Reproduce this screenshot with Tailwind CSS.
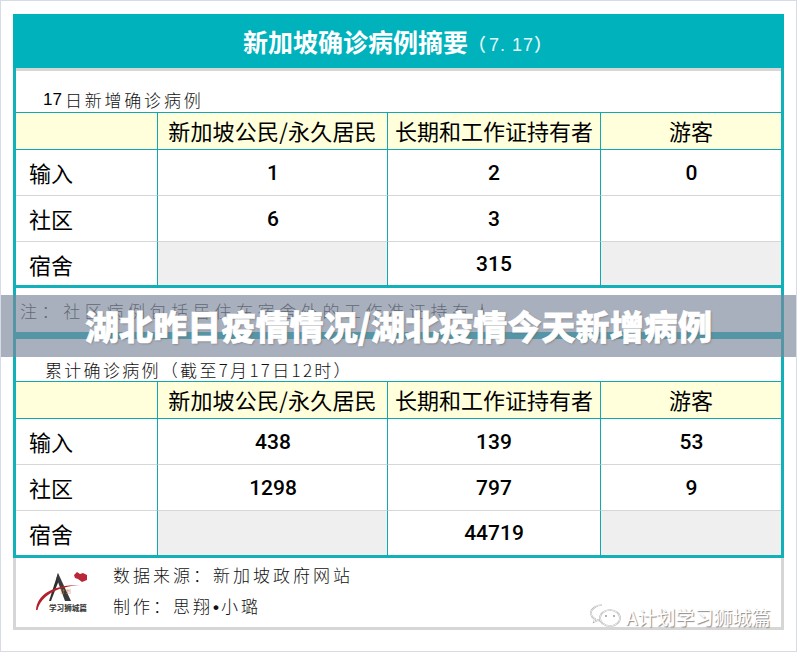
<!DOCTYPE html>
<html lang="zh">
<head>
<meta charset="utf-8">
<script src="https://cdn.jsdelivr.net/npm/@tailwindcss/browser@4"></script>
</head>
<body class="bg-white">
<div class="relative w-[797px] h-[652px] overflow-hidden bg-white border border-[#d5dce6] pt-[13px] pl-[12px] font-['Noto_Sans_CJK_SC','Noto_Sans',sans-serif] text-black">
  <div class="relative w-[771px] h-[616px] flex flex-col">
    <div class="h-[54px] shrink-0 bg-[#00b2bc] flex items-center pl-[230px] text-white">
      <span class="text-[25px] font-bold leading-none">新加坡确诊病例摘要</span>
      <span class="text-[18px] font-medium leading-none tracking-[1px] mt-[5px] text-[#e6f8f9]">（<span class="font-['Liberation_Sans'] ml-[2px]">7. 17</span>）</span>
    </div>
    <div class="h-[3px] shrink-0 bg-[#d6d6d6] border-x-[3px] border-[#12b1ba]"></div>

    <div class="flex flex-col border-x-[3px] border-[#12b1ba] h-[487px] shrink-0">
      <div class="h-[41px] flex items-end pl-[27px] text-[17px] leading-none font-light tracking-[2.8px] pb-[4px] text-[#111]">
        <span class="font-['Liberation_Sans'] text-[17px] tracking-[0px] text-black">17</span><span class="ml-[3px]">日新增确诊病例</span>
      </div>
      <div class="grid grid-cols-[142px_230px_213px_1fr] grid-rows-[37px_46px_46px_46px] border-t border-[#12a8b0] text-center">
        <div class="bg-[#ffffdc] border-r border-b border-[#12a8b0]"></div>
        <div class="bg-[#ffffdc] border-r border-b border-[#12a8b0] text-[22px] leading-[34px] tracking-[0.2px]">新加坡公民/永久居民</div>
        <div class="bg-[#ffffdc] border-r border-b border-[#12a8b0] text-[22px] leading-[34px]">长期和工作证持有者</div>
        <div class="bg-[#ffffdc] border-b border-[#12a8b0] text-[22px] leading-[34px]">游客</div>

        <div class="border-r border-[#12a8b0] border-b border-b-[#d3d7da] text-left pl-[13px] text-[22px] leading-[44px]">输入</div>
        <div class="border-r border-[#12a8b0] border-b border-b-[#d3d7da] pl-[1px] font-['Roboto'] font-medium text-[21px] leading-[47px]">1</div>
        <div class="border-r border-[#12a8b0] border-b border-b-[#d3d7da] font-['Roboto'] font-medium text-[21px] leading-[47px]">2</div>
        <div class="border-b border-b-[#d3d7da] pl-[1px] font-['Roboto'] font-medium text-[21px] leading-[47px]">0</div>

        <div class="border-r border-[#12a8b0] border-b border-b-[#d3d7da] text-left pl-[13px] text-[22px] leading-[44px]">社区</div>
        <div class="border-r border-[#12a8b0] border-b border-b-[#d3d7da] pl-[1px] font-['Roboto'] font-medium text-[21px] leading-[47px]">6</div>
        <div class="border-r border-[#12a8b0] border-b border-b-[#d3d7da] font-['Roboto'] font-medium text-[21px] leading-[47px]">3</div>
        <div class="border-b border-b-[#d3d7da]"></div>

        <div class="border-r border-[#12a8b0] border-b-[3px] border-b-[#12b1ba] text-left pl-[13px] text-[22px] leading-[44px]">宿舍</div>
        <div class="bg-[#efefef] border-r border-[#12a8b0] border-b-[3px] border-b-[#12b1ba]"></div>
        <div class="border-r border-[#12a8b0] border-b-[3px] border-b-[#12b1ba] font-['Roboto'] font-medium text-[21px] leading-[45px]">315</div>
        <div class="bg-[#efefef] border-b-[3px] border-b-[#12b1ba]"></div>
      </div>
      <div class="h-[44px] pl-[4px] pt-[14px] text-[17px] leading-none font-light tracking-[4.6px] text-[#333]">注：社区病例包括居住在宿舍外的工作准证持有人</div>
      <div class="h-[7px] bg-[#12b1ba]"></div>
      <div class="h-[42px] flex items-end pl-[29px] text-[17px] leading-none font-light tracking-[2.3px] pb-[3px] text-[#111]">累计确诊病例（截至7月17日12时）</div>
      <div class="grid grid-cols-[142px_230px_213px_1fr] grid-rows-[37px_46px_46px_47px] border-t border-[#12a8b0] text-center">
        <div class="bg-[#ffffdc] border-r border-b border-[#12a8b0]"></div>
        <div class="bg-[#ffffdc] border-r border-b border-[#12a8b0] text-[22px] leading-[34px] tracking-[0.2px]">新加坡公民/永久居民</div>
        <div class="bg-[#ffffdc] border-r border-b border-[#12a8b0] text-[22px] leading-[34px]">长期和工作证持有者</div>
        <div class="bg-[#ffffdc] border-b border-[#12a8b0] text-[22px] leading-[34px]">游客</div>

        <div class="border-r border-[#12a8b0] border-b border-b-[#d3d7da] text-left pl-[13px] text-[22px] leading-[44px]">输入</div>
        <div class="border-r border-[#12a8b0] border-b border-b-[#d3d7da] pl-[1px] font-['Roboto'] font-medium text-[21px] leading-[47px]">438</div>
        <div class="border-r border-[#12a8b0] border-b border-b-[#d3d7da] font-['Roboto'] font-medium text-[21px] leading-[47px]">139</div>
        <div class="border-b border-b-[#d3d7da] pl-[1px] font-['Roboto'] font-medium text-[21px] leading-[47px]">53</div>

        <div class="border-r border-[#12a8b0] border-b border-b-[#d3d7da] text-left pl-[13px] text-[22px] leading-[44px]">社区</div>
        <div class="border-r border-[#12a8b0] border-b border-b-[#d3d7da] pl-[1px] font-['Roboto'] font-medium text-[21px] leading-[47px]">1298</div>
        <div class="border-r border-[#12a8b0] border-b border-b-[#d3d7da] font-['Roboto'] font-medium text-[21px] leading-[47px]">797</div>
        <div class="border-b border-b-[#d3d7da] pl-[1px] font-['Roboto'] font-medium text-[21px] leading-[47px]">9</div>

        <div class="border-r border-[#12a8b0] border-b-[3px] border-b-[#12b1ba] text-left pl-[13px] text-[22px] leading-[44px]">宿舍</div>
        <div class="bg-[#efefef] border-r border-[#12a8b0] border-b-[3px] border-b-[#12b1ba]"></div>
        <div class="border-r border-[#12a8b0] border-b-[3px] border-b-[#12b1ba] font-['Roboto'] font-medium text-[21px] leading-[45px]">44719</div>
        <div class="bg-[#efefef] border-b-[3px] border-b-[#12b1ba]"></div>
      </div>
    </div>

    <div class="flex-1 border-x-[3px] border-b-[3px] border-[#d6d6d6] flex pl-[20px] pt-[11px]">
      <svg class="w-[54px] h-[46px] shrink-0 mt-[-1px]" viewBox="0 0 54 46">
        <path d="M22 5 L13 33 L15 33 L23 12 Z" fill="#2e2e2e"/>
        <path d="M22 5 L35 33 L29 33 L20.5 10 Z" fill="#3a3a3a"/>
        <path d="M0 42 C1 28 14 17 44 17 C20 19 5 28 1.5 42 Z" fill="#b3202c"/>
        <text x="24" y="25" font-size="5" fill="#d9964f" font-family="Noto Sans CJK SC">计 划</text>
        <path d="M38 7 L41 4 L44 6 L47 5 L51 7 L51 12 L46 14 L42 11 L39 10 Z" fill="#b8283a"/>
        <text x="13" y="43" font-size="7.6" font-weight="700" fill="#333" font-family="Noto Sans CJK SC">学习狮城篇</text>
      </svg>
      <div class="ml-[23px] text-[17px] leading-none font-light text-[#111]">
        <div class="tracking-[3px] mt-[-3px]">数据来源：新加坡政府网站</div>
        <div class="tracking-[3px] mt-[14px]">制作：思翔<span class="font-['Liberation_Sans'] font-bold tracking-[2px]">•</span>小璐</div>
      </div>
    </div>

    <div class="absolute left-[577px] top-[589px] flex items-center text-white text-[19px] leading-none [text-shadow:1px_1px_1px_#888]">
      <svg class="w-[32px] h-[26px]" viewBox="0 0 32 26" fill="none" stroke="#fff">
        <path d="M12 2 C6 2 1 6 1 10 C1 13 3 15 5 16 L4 19 L8 17 C9 18 10 18 11 18" stroke="#aaa" stroke-width="1.6"/>
        <path d="M12 2 C6 2 1 6 1 10 C1 13 3 15 5 16 L4 19 L8 17 C9 18 10 18 11 18" stroke-width="0.8"/>
        <ellipse cx="20" cy="15" rx="10" ry="8" stroke="#aaa" stroke-width="1.6"/>
        <ellipse cx="20" cy="15" rx="10" ry="8" stroke-width="0.8"/>
        <circle cx="16" cy="13" r="1" fill="#999" stroke="none"/>
        <circle cx="24" cy="13" r="1" fill="#999" stroke="none"/>
      </svg>
      <span class="ml-[4px] tracking-[0px]">A计划学习狮城篇</span>
    </div>
  </div>

  <div class="absolute left-[-1px] top-[294px] w-[797px] h-[62px] bg-[#7b8699]/65 flex items-center justify-center text-white text-[34px] font-black leading-none tracking-[0.1px] [-webkit-text-stroke:0.6px_white] [text-shadow:1px_1px_2px_rgba(90,90,90,0.5)]">湖北昨日疫情情况/湖北疫情今天新增病例</div>
</div>
</body>
</html>
